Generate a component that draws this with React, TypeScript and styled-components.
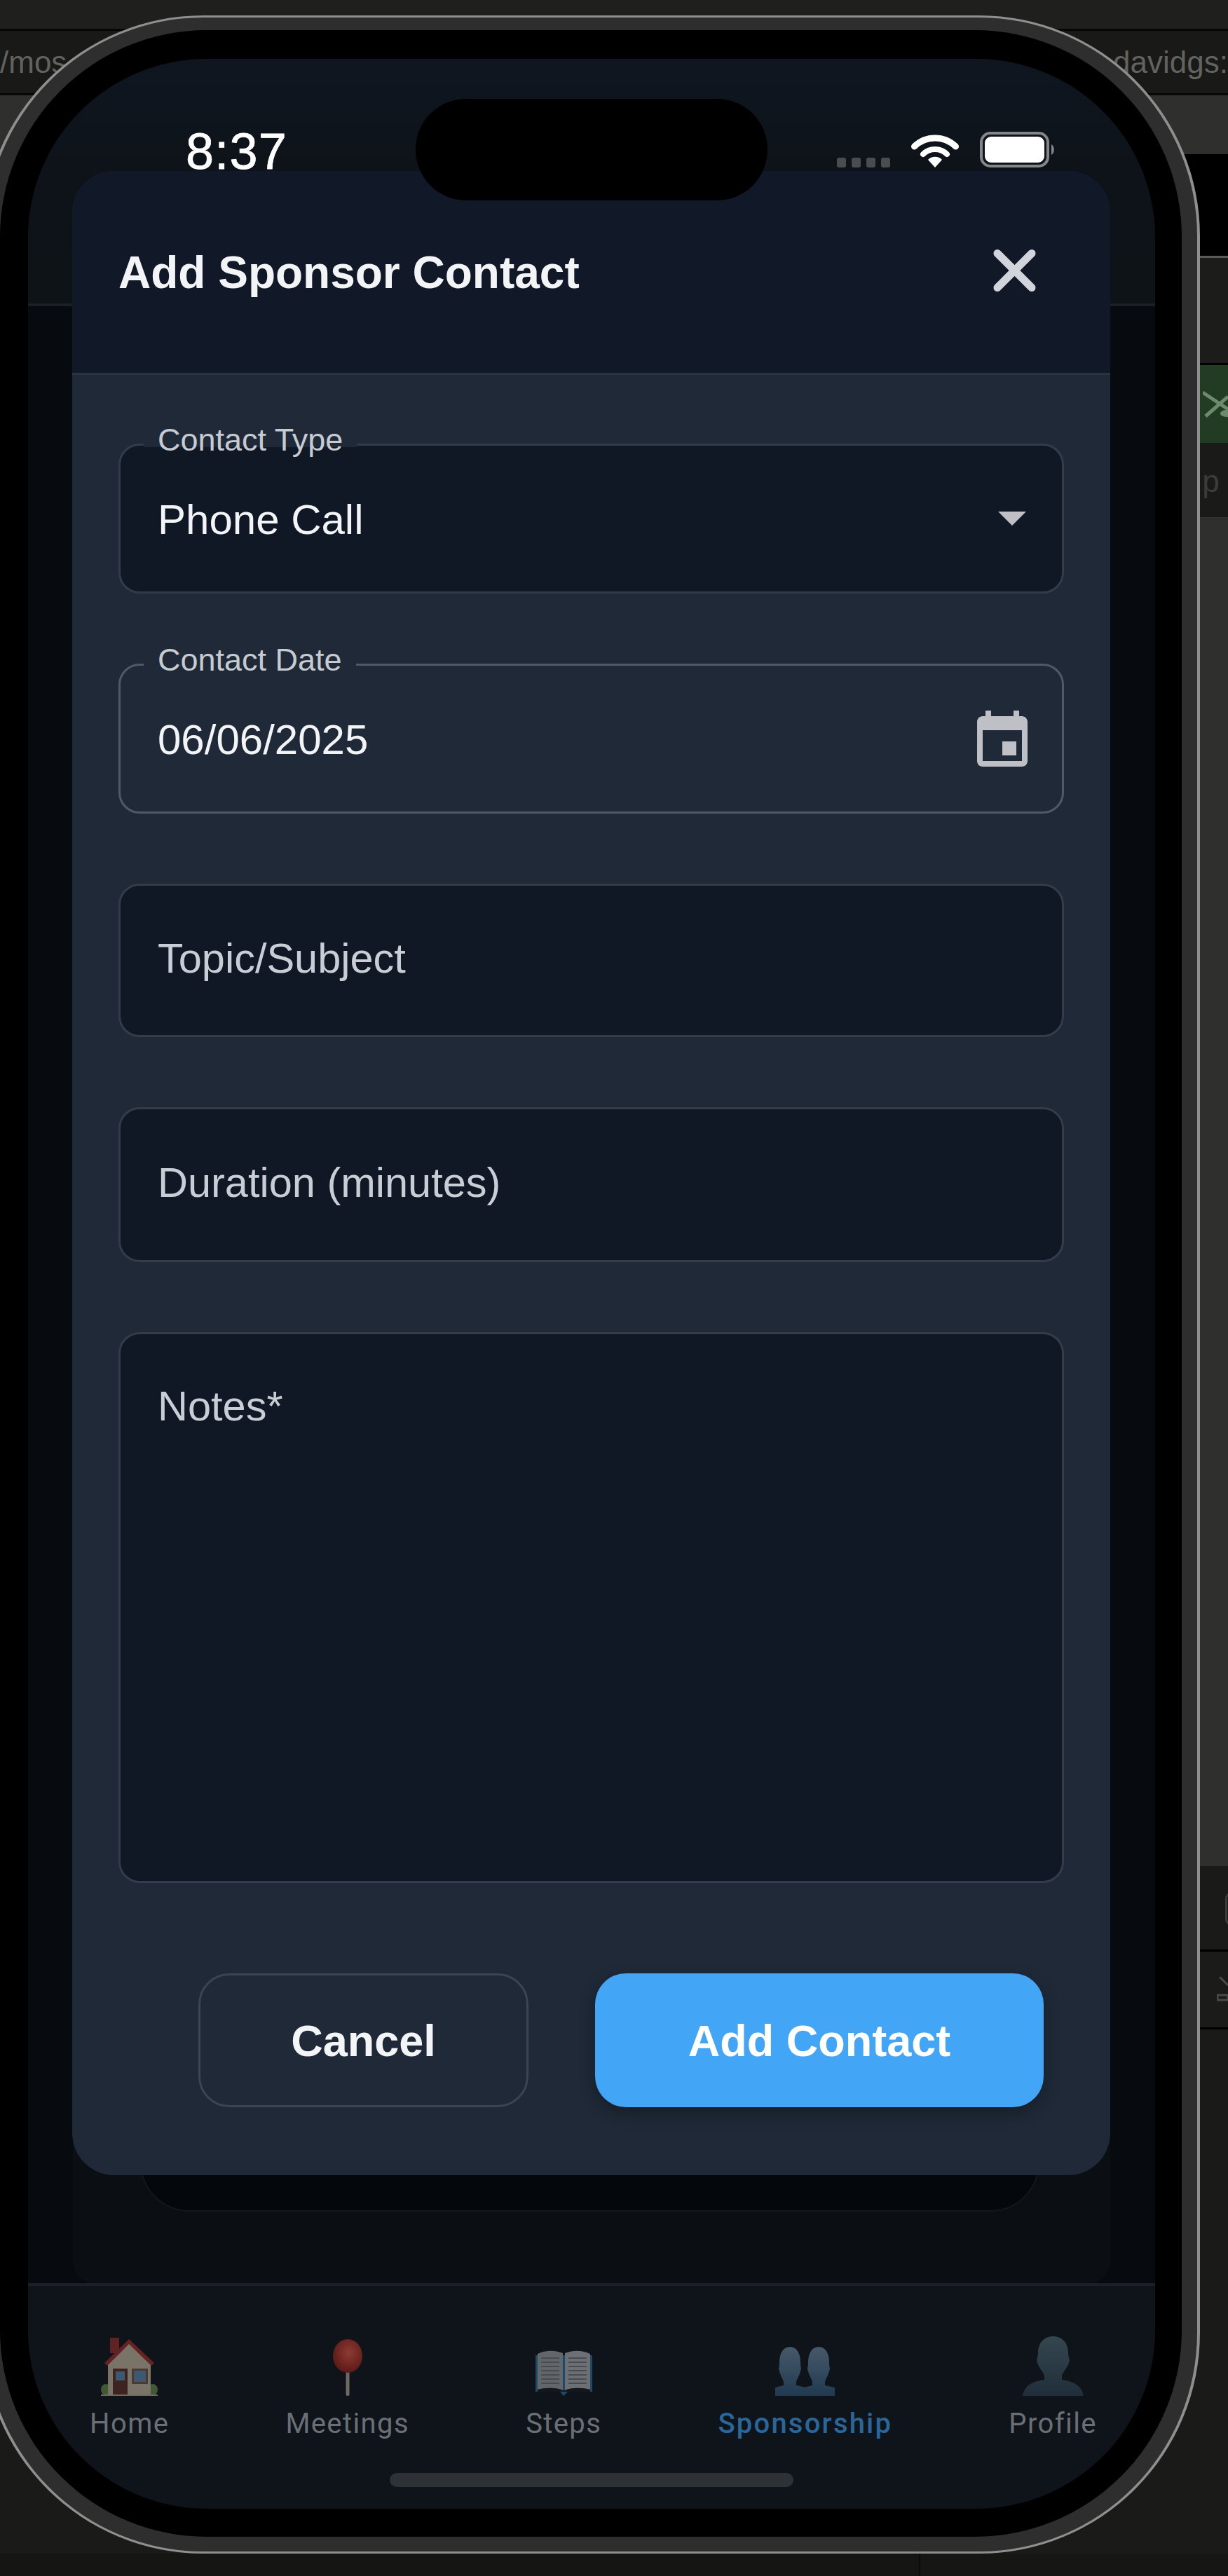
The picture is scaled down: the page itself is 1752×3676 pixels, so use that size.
import styled, { createGlobalStyle } from "styled-components";

const GlobalStyle = createGlobalStyle`
  html, body {
    margin: 0;
    padding: 0;
    background: #1a1a18;
    font-family: "Liberation Sans", Arial, sans-serif;
  }
  * { box-sizing: border-box; }
`;

const Page = styled.div`
  position: relative;
  width: 1752px;
  height: 3676px;
  overflow: hidden;
`;

/* what is left of the desktop window behind the simulator */
const Backdrop = styled.div`
  display: flex;
  flex-direction: column;
  height: 100%;
`;

const Strip = styled.div<{ $h: number; $bg: string; $line?: string }>`
  display: flex;
  align-items: center;
  justify-content: space-between;
  flex: 0 0 ${(p) => p.$h}px;
  background: ${(p) => p.$bg};
  border-top: 3px solid ${(p) => p.$line ?? "transparent"};
  overflow: hidden;
`;

const FadedText = styled.span<{ $color?: string }>`
  font-size: 44px;
  line-height: 1;
  color: ${(p) => p.$color ?? "#62625f"};
  white-space: nowrap;
`;

const RightEdge = styled.div`
  margin-left: auto;
  display: flex;
  justify-content: flex-end;
`;

const PeekBox = styled.div`
  width: 20px;
  height: 46px;
  margin-right: -16px;
  border: 3px solid #3d3d3b;
  border-radius: 8px;
`;

const BottomStrip = styled.div`
  flex: 1;
  background: linear-gradient(90deg, #151513 0, #151513 1311px, #0b0b0a 1311px, #0b0b0a 1313px, #161614 1313px);
`;

const DeviceFrame = styled.div`
  position: absolute;
  left: -25px;
  top: 22px;
  padding: 18px 22px 21px 21px;
  background: #2e2e2e;
  border: 3px solid #8f8f8f;
  border-left-width: 4px;
  border-right-width: 4px;
  border-radius: 315px;
`;

const Rim = styled.div`
  padding: 41px 38px 40px 40px;
  background: #000;
  border-radius: 295px;
`;

const Screen = styled.div`
  position: relative;
  display: flex;
  flex-direction: column;
  width: 1608px;
  height: 3496px;
  background: #070a0f;
  border-radius: 255px;
  overflow: hidden;
`;

const AppHeader = styled.div`
  flex: 0 0 353px;
  background: linear-gradient(180deg, #0f1620 0, #0e1319 45%, #0e1318 100%);
  border-bottom: 4px solid #1c2026;
`;

const Content = styled.div`
  flex: 1;
  display: flex;
  padding: 0 64px;
`;

const BackPanel = styled.div`
  flex: 1;
  display: flex;
  flex-direction: column;
  justify-content: flex-end;
  padding: 0 101px 102px 96px;
  background: #0b0f14;
  border-radius: 0 0 30px 30px;
`;

const BackCard = styled.div`
  height: 400px;
  background: #04070b;
  border: 2px solid #14171b;
  border-radius: 70px;
`;

const TabBar = styled.div`
  flex: 0 0 322px;
  display: flex;
  flex-direction: column;
  align-items: center;
  padding-top: 71px;
  background: #0f141a;
  border-top: 4px solid #1b1f26;
`;

const TabRow = styled.div`
  display: flex;
  justify-content: space-around;
  align-self: stretch;
  padding-left: 5px;
`;

const Tab = styled.div`
  display: flex;
  flex-direction: column;
  align-items: center;
`;

const TabIcon = styled.div`
  display: flex;
  align-items: flex-end;
  justify-content: center;
  height: 86px;
`;

const TabLabel = styled.span<{ $active?: boolean }>`
  margin-top: 16px;
  font-family: Roboto, "Liberation Sans", sans-serif;
  font-size: 40px;
  line-height: 47px;
  letter-spacing: ${(p) => (p.$active ? 2.2 : 1.4)}px;
  font-weight: ${(p) => (p.$active ? 500 : 400)};
  color: ${(p) => (p.$active ? "#2a6699" : "#6a6f75")};
`;

const HomeIndicator = styled.div`
  width: 576px;
  height: 20px;
  margin-top: 47px;
  background: #2e3236;
  border-radius: 10px;
`;

const StatusBar = styled.div`
  position: absolute;
  z-index: 3;
  top: 0;
  left: 0;
  right: 0;
  height: 155px;
  display: flex;
  align-items: flex-end;
  justify-content: space-between;
  padding: 0 141px 0 225px;
`;

const Time = styled.span`
  margin-bottom: -4px;
  font-size: 72px;
  line-height: 54px;
  letter-spacing: 1.2px;
  color: #fff;
  -webkit-text-stroke: 0.8px #fff;
`;

const StatusIcons = styled.div`
  display: flex;
  align-items: flex-end;
  gap: 30px;
`;

const SignalDots = styled.div`
  display: flex;
  gap: 8px;
`;

const SignalDot = styled.span`
  width: 13px;
  height: 14px;
  border-radius: 3px;
  background: #4a4d50;
`;

const Island = styled.div`
  position: absolute;
  z-index: 4;
  top: 57px;
  left: 553px;
  width: 502px;
  height: 145px;
  background: #000;
  border-radius: 72px;
`;

const Modal = styled.div`
  position: absolute;
  z-index: 2;
  top: 160px;
  left: 63px;
  width: 1481px;
  background: #1f2937;
  border-radius: 60px;
  overflow: hidden;
`;

const ModalHeader = styled.div`
  display: flex;
  align-items: center;
  justify-content: space-between;
  height: 291px;
  padding: 0 106px 4px 66px;
  background: #111827;
  border-bottom: 3px solid #2b3442;
`;

const ModalTitle = styled.h2`
  margin: 5px 0 0;
  font-size: 64px;
  font-weight: 700;
  color: #f3f4f6;
`;

const CloseButton = styled.button`
  display: flex;
  padding: 0;
  background: none;
  border: 0;
`;

const ModalBody = styled.div`
  display: flex;
  flex-direction: column;
  padding: 98px 66px 97px;
`;

const Field = styled.div<{ $h: number; $outlined?: boolean; $top?: boolean }>`
  position: relative;
  display: flex;
  align-items: ${(p) => (p.$top ? "flex-start" : "center")};
  justify-content: space-between;
  height: ${(p) => p.$h}px;
  margin-bottom: 100px;
  padding: ${(p) => (p.$top ? "68px" : "0")} 0 0 53px;
  background: ${(p) => (p.$outlined ? "transparent" : "#101725")};
  border: 3px solid ${(p) => (p.$outlined ? "#4f5a69" : "#323c4b")};
  border-radius: 30px;
`;

const FieldLabel = styled.label`
  position: absolute;
  top: -35px;
  left: 33px;
  height: 54px;
  padding: 0 20px;
  font-size: 45px;
  line-height: 54px;
  color: #c6cbd2;
  background: linear-gradient(180deg, #1f2937 0, #1f2937 37px, transparent 37px);
`;

const FieldValue = styled.span`
  margin-top: 4px;
  font-size: 60px;
  line-height: 70px;
  color: #f3f4f6;
`;

const Placeholder = styled.span`
  margin-bottom: 6px;
  font-size: 59.5px;
  line-height: 70px;
  color: #c9ced5;
`;

const FieldIcon = styled.span<{ $right: number }>`
  display: flex;
  margin-right: ${(p) => p.$right}px;
`;

const Footer = styled.div`
  display: flex;
  justify-content: flex-end;
  gap: 95px;
  margin-top: 29px;
  padding-right: 29px;
`;

const ActionButton = styled.button<{ $primary?: boolean }>`
  width: ${(p) => (p.$primary ? 640 : 471)}px;
  height: 191px;
  font-family: inherit;
  font-size: 63px;
  font-weight: 700;
  color: ${(p) => (p.$primary ? "#fff" : "#f3f4f6")};
  background: ${(p) => (p.$primary ? "#42a5f5" : "transparent")};
  border: ${(p) => (p.$primary ? "0" : "3px solid #3b4553")};
  border-radius: 44px;
  box-shadow: ${(p) => (p.$primary ? "0 8px 22px rgba(0, 0, 0, 0.28)" : "none")};
`;

function WifiIcon() {
  return (
    <svg width="68" height="50" viewBox="0 0 68 50" fill="none">
      <path d="M4.5 20 A42 42 0 0 1 63.5 20" stroke="#fff" strokeWidth="9" strokeLinecap="round" />
      <path d="M17 31 A24 24 0 0 1 51 31" stroke="#fff" strokeWidth="8" strokeLinecap="round" />
      <path d="M34 50 L24 39 A14 14 0 0 1 44 39 Z" fill="#fff" />
    </svg>
  );
}

function BatteryIcon() {
  return (
    <svg width="109" height="51" viewBox="0 0 109 51" fill="none">
      <rect x="2" y="2" width="95" height="47" rx="13" stroke="#84868a" strokeWidth="4" />
      <rect x="7" y="7" width="85" height="37" rx="9" fill="#fff" />
      <path d="M102 18 C107 20 107 31 102 33 Z" fill="#84868a" />
    </svg>
  );
}

function CloseIcon() {
  return (
    <svg width="61" height="60" viewBox="0 0 61 60" fill="none">
      <path d="M6 5.5 L55 54.5 M55 5.5 L6 54.5" stroke="#d1d5db" strokeWidth="11" strokeLinecap="round" />
    </svg>
  );
}

function CaretIcon() {
  return (
    <svg width="40" height="20" viewBox="0 0 40 20">
      <path d="M0 0 H40 L20 20 Z" fill="#bfc0c6" />
    </svg>
  );
}

function CalendarIcon() {
  return (
    <svg width="72" height="80" viewBox="3 1 18 20">
      <path
        fill="#bfc0c5"
        d="M17 12h-5v5h5v-5zM16 1v2H8V1H6v2H5c-1.11 0-1.99.9-1.99 2L3 19c0 1.1.89 2 2 2h14c1.1 0 2-.9 2-2V5c0-1.1-.9-2-2-2h-1V1h-2zm3 18H5V8h14v11z"
      />
    </svg>
  );
}

function HouseIcon() {
  return (
    <svg width="81" height="83" viewBox="0 0 81 83">
      <ellipse cx="7" cy="74" rx="7" ry="8" fill="#3f5a34" />
      <ellipse cx="74" cy="74" rx="7" ry="8" fill="#3f5a34" />
      <rect x="13" y="0" width="13" height="22" fill="#5e2322" />
      <path d="M10 36 L40 6 L71 36 V83 H10 Z" fill="#7a7368" />
      <path d="M5 36 L40 2 L76 36 L72 40 L40 9 L9 40 Z" fill="#662222" />
      <rect x="17" y="44" width="21" height="39" fill="#3e2420" />
      <rect x="21" y="48" width="13" height="13" fill="#3a5a74" />
      <rect x="44" y="44" width="23" height="22" fill="#4a3a30" />
      <rect x="47" y="47" width="17" height="16" fill="#3a5a74" />
      <rect x="0" y="81" width="81" height="2" fill="#6f6a5f" />
    </svg>
  );
}

function PinIcon() {
  return (
    <svg width="44" height="81" viewBox="0 0 44 81">
      <defs>
        <radialGradient id="pinHead" cx="0.55" cy="0.4" r="0.6">
          <stop offset="0" stopColor="#8e3a33" />
          <stop offset="1" stopColor="#5c1a17" />
        </radialGradient>
      </defs>
      <rect x="19.5" y="40" width="5" height="41" rx="2" fill="#6e6a62" />
      <ellipse cx="22" cy="24" rx="21" ry="24" fill="url(#pinHead)" />
    </svg>
  );
}

function BookIcon() {
  return (
    <svg width="81" height="66" viewBox="0 0 81 66">
      <path d="M0 8 H81 V60 H46 L40 66 L35 60 H0 Z" fill="#1d4a66" />
      <path d="M3 6 C15 0 30 1 39 5 V58 C30 54 15 54 3 57 Z" fill="#63676b" />
      <path d="M78 6 C66 0 51 1 42 5 V58 C51 54 66 54 78 57 Z" fill="#6c7074" />
      <path d="M3 57 C15 54 30 54 39 58 H42 C51 54 66 54 78 57 V60 H3 Z" fill="#15181b" />
      <path
        d="M8 12 H34 M8 18 H34 M8 24 H34 M8 30 H34 M8 36 H34 M8 42 H34 M8 48 H34 M47 12 H73 M47 18 H73 M47 24 H73 M47 30 H73 M47 36 H73 M47 42 H73 M47 48 H73"
        stroke="#484c50"
        strokeWidth="2"
      />
    </svg>
  );
}

function BustPath({ dx, fill }: { dx: number; fill: string }) {
  return (
    <path
      transform={`translate(${dx} 0)`}
      fill={fill}
      d="M21 0 C31 0 36 10 36 22 C36 30 38 30 36 35 C34 42 31 46 30 50 L30 55 L44 58 V70 H0 V58 L12 55 L12 50 C11 46 8 42 6 35 C4 30 6 30 6 22 C6 10 11 0 21 0 Z"
    />
  );
}

function BustsIcon() {
  return (
    <svg width="85" height="70" viewBox="0 0 85 70">
      <defs>
        <linearGradient id="bustsFill" x1="0" y1="0" x2="0" y2="1">
          <stop offset="0" stopColor="#46596a" />
          <stop offset="1" stopColor="#213a50" />
        </linearGradient>
      </defs>
      <BustPath dx={0} fill="url(#bustsFill)" />
      <BustPath dx={41} fill="url(#bustsFill)" />
    </svg>
  );
}

function ProfileIcon() {
  return (
    <svg width="87" height="85" viewBox="0 0 87 85">
      <defs>
        <linearGradient id="profileFill" x1="0" y1="0" x2="0" y2="1">
          <stop offset="0" stopColor="#36464f" />
          <stop offset="1" stopColor="#1f2e3a" />
        </linearGradient>
      </defs>
      <path
        fill="url(#profileFill)"
        d="M43.5 0 C56 0 65 9 65 24 C65 30 68 32 66 38 C63 46 58 50 56 56 L56 62 C70 64 84 68 87 85 H0 C3 68 17 64 31 62 L31 56 C29 50 24 46 21 38 C19 32 22 30 22 24 C22 9 31 0 43.5 0 Z"
      />
    </svg>
  );
}

function ForkKnifeIcon() {
  return (
    <svg width="36" height="42" viewBox="0 0 36 42" fill="none">
      <path d="M0 4 L36 28 M4 38 L36 10" stroke="#6d8a6e" strokeWidth="5" />
      <ellipse cx="34" cy="34" rx="9" ry="5" fill="#6d8a6e" />
    </svg>
  );
}

function TrayIcon() {
  return (
    <svg width="16" height="36" viewBox="0 0 16 36" fill="none">
      <path d="M4 0 L16 12 M1 26 H16 V33 H1 Z" stroke="#4a4a48" strokeWidth="3" />
    </svg>
  );
}

const tabs = [
  { label: "Home", icon: <HouseIcon /> },
  { label: "Meetings", icon: <PinIcon /> },
  { label: "Steps", icon: <BookIcon /> },
  { label: "Sponsorship", icon: <BustsIcon />, active: true },
  { label: "Profile", icon: <ProfileIcon /> },
];

export default function App() {
  return (
    <Page>
      <GlobalStyle />
      <Backdrop>
        <Strip $h={41} $bg="#1f1f1d" />
        <Strip $h={92} $bg="#191917" $line="#060606">
          <FadedText>/mos</FadedText>
          <FadedText>davidgs:</FadedText>
        </Strip>
        <Strip $h={87} $bg="#2f2f2e" $line="#060606" />
        <Strip $h={145} $bg="#000" />
        <Strip $h={153} $bg="#1c1c1b" $line="#5a5a5a" />
        <Strip $h={114} $bg="#213c22" $line="#000">
          <RightEdge>
            <ForkKnifeIcon />
          </RightEdge>
        </Strip>
        <Strip $h={106} $bg="#1a1a18">
          <RightEdge>
            <FadedText $color="#3c3c3a">p&nbsp;</FadedText>
          </RightEdge>
        </Strip>
        <Strip $h={1925} $bg="#2f2f2e" />
        <Strip $h={119} $bg="#1a1a18">
          <RightEdge>
            <PeekBox />
          </RightEdge>
        </Strip>
        <Strip $h={111} $bg="#1b1b19" $line="#000">
          <RightEdge>
            <TrayIcon />
          </RightEdge>
        </Strip>
        <Strip $h={751} $bg="#1a1a18" $line="#000" />
        <BottomStrip />
      </Backdrop>

      <DeviceFrame>
        <Rim>
          <Screen>
            <AppHeader />
            <Content>
              <BackPanel>
                <BackCard />
              </BackPanel>
            </Content>
            <TabBar>
              <TabRow>
                {tabs.map((tab) => (
                  <Tab key={tab.label}>
                    <TabIcon>{tab.icon}</TabIcon>
                    <TabLabel $active={tab.active}>{tab.label}</TabLabel>
                  </Tab>
                ))}
              </TabRow>
              <HomeIndicator />
            </TabBar>

            <StatusBar>
              <Time>8:37</Time>
              <StatusIcons>
                <SignalDots>
                  <SignalDot />
                  <SignalDot />
                  <SignalDot />
                  <SignalDot />
                </SignalDots>
                <WifiIcon />
                <BatteryIcon />
              </StatusIcons>
            </StatusBar>
            <Island />

            <Modal>
              <ModalHeader>
                <ModalTitle>Add Sponsor Contact</ModalTitle>
                <CloseButton aria-label="Close">
                  <CloseIcon />
                </CloseButton>
              </ModalHeader>
              <ModalBody>
                <Field $h={214}>
                  <FieldLabel>Contact Type</FieldLabel>
                  <FieldValue>Phone Call</FieldValue>
                  <FieldIcon $right={51}>
                    <CaretIcon />
                  </FieldIcon>
                </Field>
                <Field $h={214} $outlined>
                  <FieldLabel>Contact Date</FieldLabel>
                  <FieldValue>06/06/2025</FieldValue>
                  <FieldIcon $right={49}>
                    <CalendarIcon />
                  </FieldIcon>
                </Field>
                <Field $h={219}>
                  <Placeholder>Topic/Subject</Placeholder>
                </Field>
                <Field $h={221}>
                  <Placeholder>Duration (minutes)</Placeholder>
                </Field>
                <Field $h={786} $top>
                  <Placeholder>Notes*</Placeholder>
                </Field>
                <Footer>
                  <ActionButton>Cancel</ActionButton>
                  <ActionButton $primary>Add Contact</ActionButton>
                </Footer>
              </ModalBody>
            </Modal>
          </Screen>
        </Rim>
      </DeviceFrame>
    </Page>
  );
}
